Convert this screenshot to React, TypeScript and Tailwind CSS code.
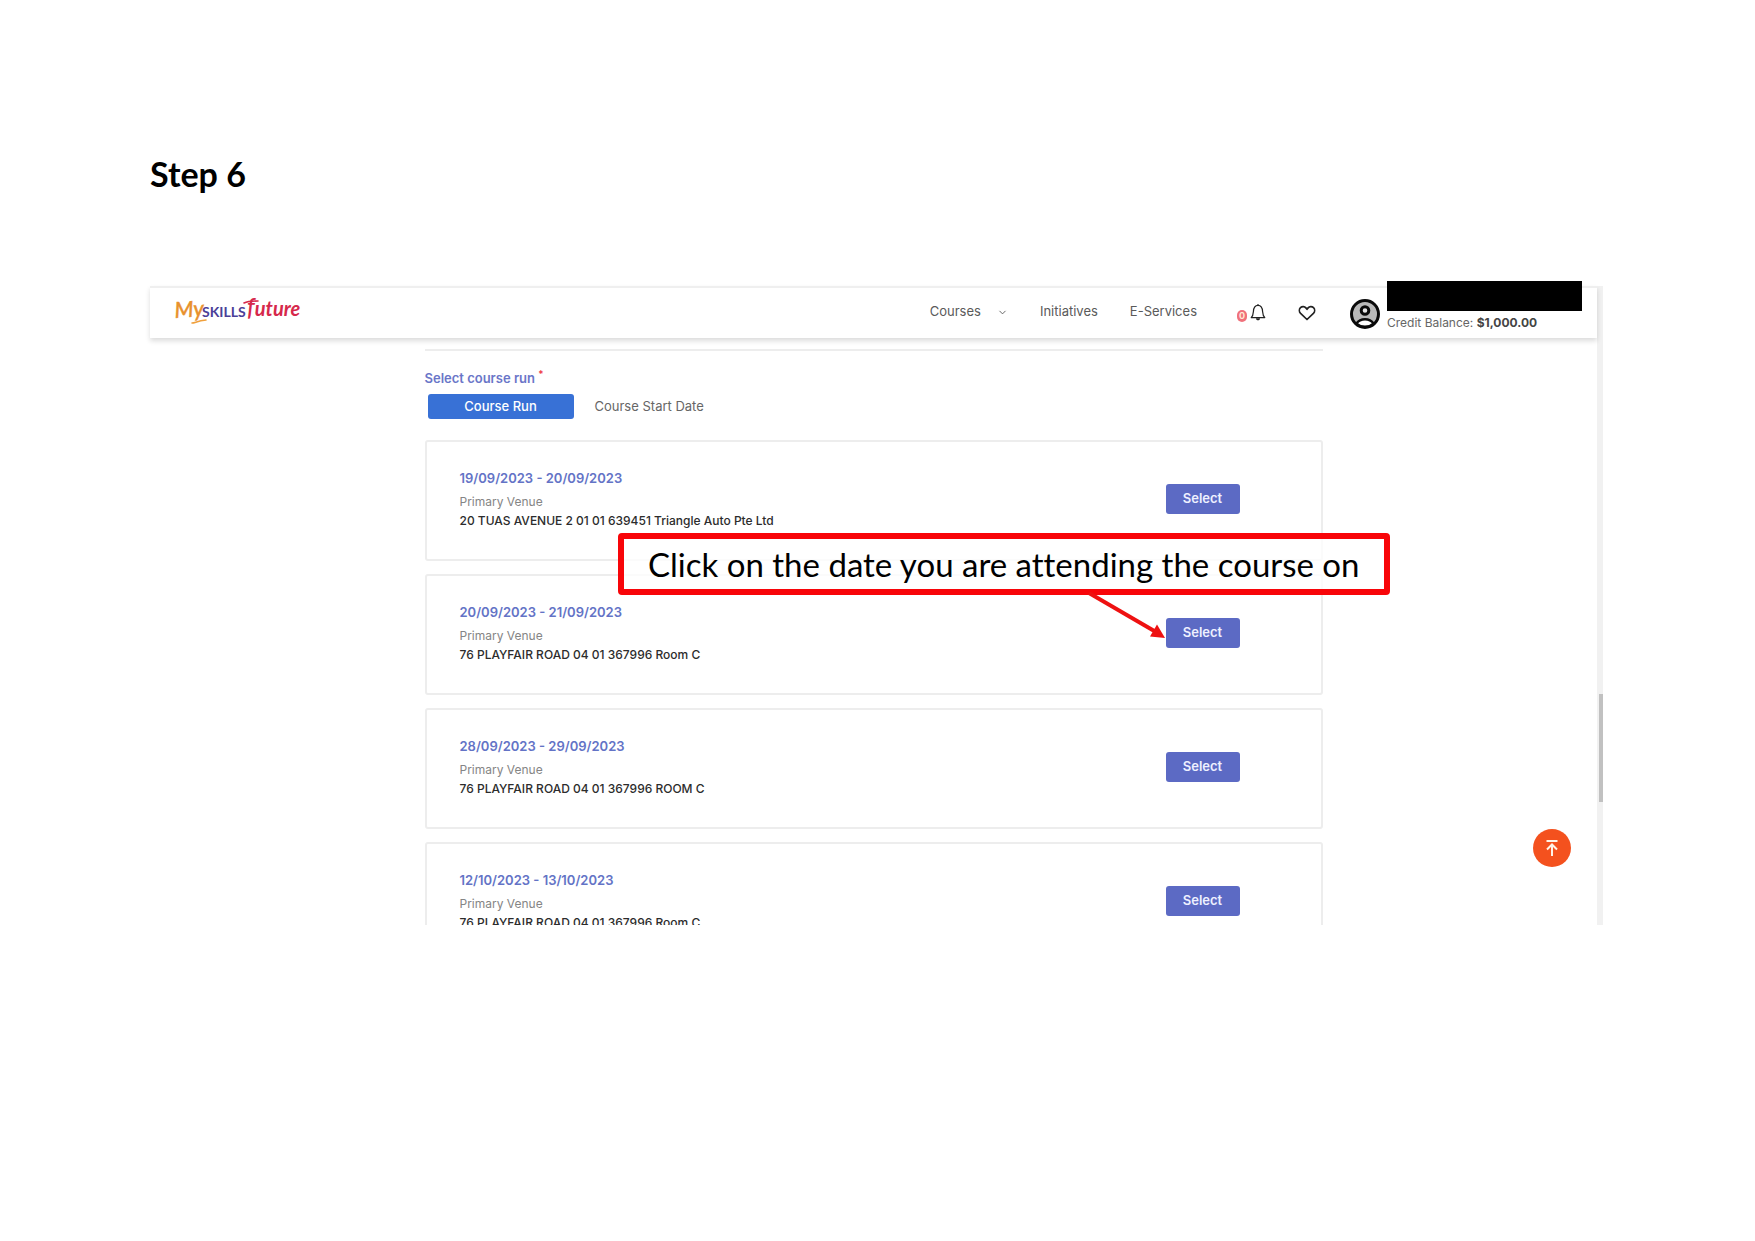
import { ChevronDown } from "lucide-react";

const runs = [
  { date: "19/09/2023 - 20/09/2023", venue: "20 TUAS AVENUE 2 01 01 639451 Triangle Auto Pte Ltd" },
  { date: "20/09/2023 - 21/09/2023", venue: "76 PLAYFAIR ROAD 04 01 367996 Room C", callout: true },
  { date: "28/09/2023 - 29/09/2023", venue: "76 PLAYFAIR ROAD 04 01 367996 ROOM C" },
  { date: "12/10/2023 - 13/10/2023", venue: "76 PLAYFAIR ROAD 04 01 367996 Room C" },
];

function Logo() {
  return (
    <svg className="overflow-visible" width="128" height="42" viewBox="0 0 128 42" role="img" aria-label="MySkillsFuture">
      <g fontFamily="Lato, sans-serif">
        <text x="1" y="26" fontSize="22" fontStyle="italic" fontWeight="500" fill="#e8912d" stroke="#e8912d" strokeWidth="0.400" transform="rotate(-4 1 26)">
          My
        </text>
        <text x="28" y="25" fontSize="14" fontWeight="700" fill="#4b3f98">
          SKILLS
        </text>
        <text x="73" y="24" fontSize="20" fontStyle="italic" fontWeight="700" fill="#d6284b">
          <tspan fontSize="24" fontWeight="500">f</tspan>uture
        </text>
      </g>
      <path d="M18 31c3 0 5-2 14-3" fill="none" stroke="#f0a03c" strokeWidth="1.600" strokeLinecap="round" />
      <path d="M70 11c4-2 9-2 14-2" fill="none" stroke="#d6284b" strokeWidth="1.600" strokeLinecap="round" />
    </svg>
  );
}

function BellIcon() {
  return (
    <svg width="16" height="18" viewBox="0 0 16 18" fill="none" stroke="#222" strokeWidth="1.2">
      <path d="M8 1v1.2M1.2 14.6h13.6c-1.6-1.5-2-3-2.2-6C12.400 4.500 11 2.400 8 2.400S3.600 4.500 3.400 8.600c-.2 3-.6 4.500-2.200 6z" strokeLinejoin="round" />
      <path d="M6 15.200h4c0 1.400-.8 2-2 2s-2-.6-2-2z" fill="#222" stroke="none" />
    </svg>
  );
}

function HeartIcon() {
  return (
    <svg width="18" height="16" viewBox="0 0 18 16" fill="none" stroke="#222" strokeWidth="1.7" strokeLinejoin="round">
      <path d="M9 14.500 2.600 8.400C1 6.700 1 4.100 2.500 2.600c1.600-1.500 4-1.400 5.400.3L9 4.300l1.100-1.400c1.400-1.700 3.800-1.800 5.400-.3C17 4.100 17 6.700 15.400 8.400z" />
    </svg>
  );
}

function AvatarIcon() {
  return (
    <svg width="30" height="30" viewBox="0 0 30 30" fill="none" stroke="#0a0a0a">
      <circle cx="15" cy="15" r="13.500" fill="#b9b9b9" strokeWidth="3" />
      <path d="M6.500 24.500C8.500 21.500 11.500 20.200 15 20.200s6.500 1.300 8.500 4.300c-2.300 2.200-5.200 3.200-8.500 3.200s-6.200-1-8.500-3.200z" fill="#fff" strokeWidth="2.400" />
      <circle cx="15" cy="11.500" r="3.800" fill="#e4e4e4" strokeWidth="3" />
    </svg>
  );
}

function Header() {
  return (
    <header className="relative z-10 flex h-[52px] items-center justify-between border-t-2 border-[#efefef] bg-white pr-[15px] pl-6 shadow-[0_3px_5px_rgba(0,0,0,0.14)]">
      <a href="#" className="block">
        <Logo />
      </a>
      <div className="flex items-center">
        <nav className="flex items-center gap-8 pb-[2px] text-[13px] text-[#5a5a5a]">
          <button className="flex items-center gap-4">
            Courses
            <ChevronDown size={11} />
          </button>
          <a href="#">Initiatives</a>
          <a href="#">E-Services</a>
        </nav>
        <button className="ml-10 flex items-center gap-[3px] pb-[2px]" aria-label="Notifications">
          <span className="mt-2 flex h-3 w-[10px] items-center justify-center rounded-full bg-[#f0717b] text-[9px] font-bold text-[#ffe9d6]">
            0
          </span>
          <BellIcon />
        </button>
        <button className="ml-8" aria-label="Favourites">
          <HeartIcon />
        </button>
        <div className="ml-[34px] flex items-start gap-[7px] pb-[14px]">
          <div className="pt-[18px]">
            <AvatarIcon />
          </div>
          <div className="w-[195px]">
            <div className="h-[30px] bg-black" />
            <p className="mt-1 text-[12px] leading-4 whitespace-nowrap text-[#666]">
              Credit Balance: <b className="font-bold text-[#444]">$1,000.00</b>
            </p>
          </div>
        </div>
      </div>
    </header>
  );
}

function Callout() {
  return (
    <div className="absolute -top-[43px] -right-[69px] z-10 rounded-[4px] border-[6px] border-[#f80509] bg-white/75 px-6 font-[Lato,sans-serif] text-[33px] leading-[50px] whitespace-nowrap text-black [font-variant-ligatures:none]">
      Click on the date you are attending the course on
      <svg className="absolute top-[53px] right-[216px]" width="82" height="50" viewBox="0 0 82 50">
        <path d="M3 1 L70 40" stroke="#ee1111" strokeWidth="4" />
        <path d="M79 46 L64 44.500 L71 32.500 Z" fill="#ee1111" />
      </svg>
    </div>
  );
}

function RunCard({ run }: { run: (typeof runs)[number] }) {
  return (
    <li className="relative flex h-[121px] justify-between rounded-[3px] border-2 border-[#ededed] pr-[81px] pl-[33px]">
      <div className="pt-[26px]">
        <h3 className="text-[13px] leading-5 font-semibold text-[#6373c6]">{run.date}</h3>
        <p className="mt-1 text-[12px] leading-5 text-[#858585]">Primary Venue</p>
        <p className="text-[12px] leading-[18px] font-medium text-[#2c2c2c]">{run.venue}</p>
      </div>
      <button className="mt-[42px] h-[30px] w-[74px] rounded-[3px] bg-[#5c6ac4] text-[13px] font-semibold text-[#eef0ff]">
        Select
      </button>
      {run.callout && <Callout />}
    </li>
  );
}

export default function App() {
  return (
    <main className="min-h-screen bg-white pt-[154px] pr-[152px] pl-[150px]">
      <h1 className="font-[Lato,sans-serif] text-[34px] leading-10 font-bold text-black">Step 6</h1>

      <section className="mt-[92px] flex font-[Inter,sans-serif]">
        <div className="relative flex-1">
          <Header />

          <div className="max-h-[587px] overflow-hidden">
            <div className="mx-auto max-w-[898px] pt-[11px]">
              <hr className="border-t-2 border-[#ededed]" />

              <h2 className="mt-[17px] text-[13px] leading-5 font-semibold text-[#6a76c8]">
                Select course run <sup className="text-[#ee3344]">*</sup>
              </h2>
              <div className="mt-[6px] ml-[3px] flex items-center text-[13px]">
                <button className="h-[25px] w-[146px] rounded-[3px] bg-[#3871d6] font-medium text-white">
                  Course Run
                </button>
                <button className="ml-[21px] text-[#666]">Course Start Date</button>
              </div>

              <ul className="mt-[21px] space-y-[13px]">
                {runs.map((run) => (
                  <RunCard key={run.date} run={run} />
                ))}
              </ul>
            </div>
          </div>

          <button
            className="absolute right-[26px] bottom-[58px] flex h-[38px] w-[38px] items-center justify-center rounded-full bg-[#f4511e]"
            aria-label="Back to top"
          >
            <svg width="14" height="18" viewBox="0 0 14 18" fill="none" stroke="#fff3e8" strokeWidth="2">
              <path d="M1.500 2h11M7 17V6M2 10.500l5-5 5 5" />
            </svg>
          </button>
        </div>

        {/* Scrollbar */}
        <div className="w-[6px] bg-[#f1f1f1] pt-[408px]">
          <div className="ml-[2px] h-[108px] bg-[#c1c1c1]" />
        </div>
      </section>
    </main>
  );
}
